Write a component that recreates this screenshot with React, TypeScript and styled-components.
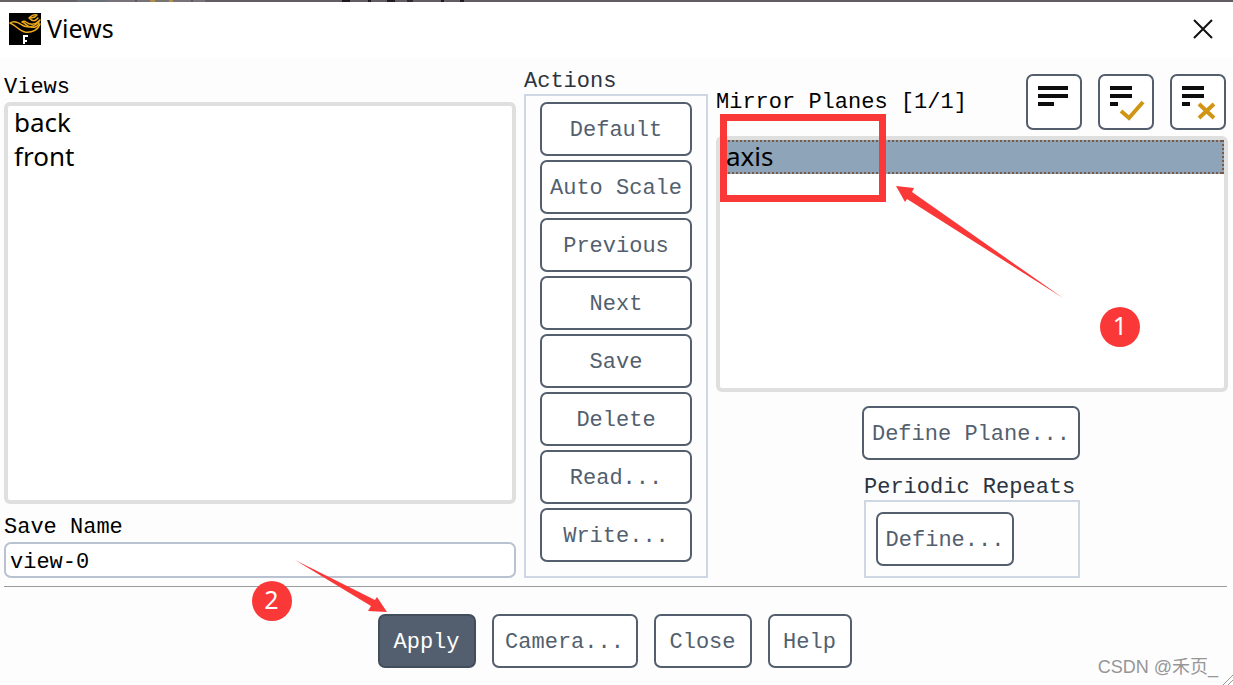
import React, { useState } from "react";
import styled, { createGlobalStyle, css } from "styled-components";

const MONO = '"Liberation Mono", monospace';
const SANS = '"Noto Sans", "Open Sans", sans-serif';
const RED = "#fb3838";
const SLATE = "#535f6e";

const GlobalStyle = createGlobalStyle`
  *, *::before, *::after { box-sizing: border-box; }
  body { margin: 0; background: #fdfdfd; color: #000; font: 22px/24px ${MONO}; }
`;

const Dialog = styled.main`
  position: relative;
  display: flex;
  flex-direction: column;
  min-height: 100vh;
  overflow: hidden;
`;

const Backdrop = styled.div`
  height: 2px;
  background: linear-gradient(
    90deg,
    #666165 0 77px, #6a7078 77px 107px, #77727a 107px 135px, #5a565a 135px 137px,
    #77727a 137px 150px, #b08d48 150px 155px, #77756e 155px 169px, #b08d48 169px 173px,
    #77727a 173px 191px, #5a565a 191px 193px, #77727a 193px 205px, #625d63 205px 342px,
    #1d1b1d 342px 350px, #625d63 350px 368px, #1d1b1d 368px 371px, #625d63 371px 387px,
    #1d1b1d 387px 395px, #625d63 395px 407px, #2d2b2d 407px 413px, #625d63 413px 441px,
    #1d1b1d 441px 444px, #625d63 444px 460px, #1d1b1d 460px 464px, #625d63 464px
  );
`;

const TitleBar = styled.header`
  display: flex;
  align-items: center;
  gap: 5px;
  height: 56px;
  padding: 0 16px 2px 9px;
  background: #fff;
`;

const Title = styled.h1`
  flex: 1;
  margin: 0;
  padding-bottom: 2px;
  font: 400 25px/32px ${SANS};
`;

const CloseButton = styled.button`
  display: flex;
  padding: 4px;
  border: 0;
  background: none;
`;

const Columns = styled.div`
  flex: 1;
  display: grid;
  grid-template-columns: minmax(0, 1fr) 184px minmax(0, 1fr);
  gap: 8px;
  margin: 8px 5px 8px 4px;
`;

const Column = styled.section<{ $top?: number }>`
  position: relative;
  display: flex;
  flex-direction: column;
  padding-top: ${(p) => p.$top ?? 0}px;
`;

const labelText = css`
  margin: 0;
  padding-top: 2px;
  font: 400 22px/24px ${MONO};
  white-space: nowrap;
`;

const Label = styled.label`
  ${labelText}
  display: block;
`;

const Heading = styled.h2`
  ${labelText}
  color: #2b3440;
`;

const List = styled.ul`
  flex: 1;
  margin: 2px 0 0;
  padding: 0;
  border: 4px solid #dfdfdf;
  border-radius: 6px;
  background: #fff;
  list-style: none;
`;

const dots = (angle: number) =>
  `repeating-linear-gradient(${angle}deg, #7a5a44 0 2px, transparent 2px 4px)`;

const Item = styled.li<{ $selected?: boolean }>`
  height: 34px;
  padding: 0 6px;
  font: 26px/32px ${SANS};
  ${(p) =>
    p.$selected &&
    css`
      background:
        ${dots(90)} top / 100% 2px no-repeat,
        ${dots(90)} bottom / 100% 2px no-repeat,
        ${dots(180)} right / 2px 100% no-repeat,
        #8ea4b8;
    `}
`;

const SaveField = styled.div`
  padding-top: 10px;
`;

const NameInput = styled.input`
  display: block;
  width: 100%;
  height: 36px;
  margin-top: 2px;
  padding: 4px 4px 0;
  border: 2px solid #b8c2d0;
  border-radius: 7px;
  background: #fff;
  color: #000;
  font: 22px/24px ${MONO};
`;

const Button = styled.button<{ $primary?: boolean; $width?: number }>`
  flex: none;
  width: ${(p) => (p.$width ? `${p.$width}px` : "auto")};
  height: 54px;
  padding: 4px 0 0;
  border: 2px solid ${(p) => (p.$primary ? "#434e5c" : SLATE)};
  border-radius: 7px;
  background: ${(p) => (p.$primary ? SLATE : "#fff")};
  color: ${(p) => (p.$primary ? "#fff" : SLATE)};
  font: 22px/24px ${MONO};
  white-space: nowrap;
`;

const Group = styled.div`
  border: 2px solid #d0d7e4;
`;

const ActionGroup = styled(Group)`
  flex: 1;
  display: flex;
  flex-direction: column;
  align-items: center;
  gap: 4px;
  padding: 6px 0 14px;
`;

const PlaneHeader = styled.div`
  display: flex;
  align-items: center;
  justify-content: space-between;
  height: 56px;
  padding-right: 2px;
`;

const Tools = styled.div`
  display: flex;
  gap: 16px;
`;

const ToolButton = styled(Button)`
  width: 56px;
  height: 56px;
  padding: 0;
`;

const PlaneList = styled(List)`
  margin-top: 6px;
`;

const PlaneActions = styled.div`
  display: flex;
  flex-direction: column;
  align-items: center;
  padding: 14px 2px 0 0;
`;

const Periodic = styled.section`
  width: 218px;
  margin-top: 14px;
  padding-left: 2px;
`;

const PeriodicGroup = styled(Group)`
  padding: 10px;
`;

const Footer = styled.footer`
  position: relative;
  display: flex;
  justify-content: center;
  gap: 16px;
  margin: 0 6px 0 4px;
  padding: 27px 2px 17px 0;
  border-top: 1px solid #9b9b9b;
`;

const Highlight = styled.div`
  position: absolute;
  top: 48px;
  left: 4px;
  width: 166px;
  height: 88px;
  border: 7px solid ${RED};
  pointer-events: none;
`;

const Arrow = styled.svg<{ $top: number; $left: string }>`
  position: absolute;
  top: ${(p) => p.$top}px;
  left: ${(p) => p.$left};
  fill: ${RED};
  pointer-events: none;
`;

const Badge = styled.span<{ $top: number; $left: string }>`
  position: absolute;
  top: ${(p) => p.$top}px;
  left: ${(p) => p.$left};
  width: 40px;
  height: 40px;
  border-radius: 50%;
  background: ${RED};
  color: #fff;
  font: 25px/36px ${SANS};
  text-align: center;
`;

const Watermark = styled.span`
  position: absolute;
  right: 15px;
  bottom: 6px;
  color: #969696;
  font: 18px/24px "Liberation Sans", "Noto Sans CJK SC", sans-serif;
`;

const Grip = styled.svg`
  position: absolute;
  right: 0;
  bottom: 0;
`;

const Logo = () => (
  <svg width="33" height="32" viewBox="0 0 33 32" aria-hidden="true">
    <path d="M0 0h32v32H0z" fill="#000" />
    <g fill="none" stroke="#eda91c" strokeWidth="1.5" strokeLinejoin="round" strokeLinecap="round">
      <path d="M31 11c-2 6-8 9-15 8C10 18 8 13 1 10c4-3 8-1 12 2 5 3 12 3 18-5" />
      <path d="M30 8c-4 4-9 4-13 1-1-1-3-1-4 0 4 1 5 5 9 5 4 1 7-1 8-4" />
      <path d="M29 5c-3 4-6 3-9 0 3-1 5 1 8-3-3-1-5 0-7 2" />
    </g>
    <path d="M14 23h5M14 28h4M15 22v9" stroke="#fff" strokeWidth="2" fill="none" />
  </svg>
);

const ListIcon = ({ mark }: { mark?: "check" | "cross" }) => (
  <svg width="52" height="52" viewBox="0 0 52 52" aria-hidden="true">
    <path
      d={mark ? "M10 12h22M10 20h22M10 28h8" : "M10 12h30M10 20h30M10 28h16"}
      stroke="#0d0d0d"
      strokeWidth="4"
    />
    {mark === "check" && (
      <path d="M21 35l8 7 14-16" fill="none" stroke="#cf9513" strokeWidth="4" />
    )}
    {mark === "cross" && (
      <path d="M27 28l15 14M42 28L27 42" fill="none" stroke="#cf9513" strokeWidth="4" />
    )}
  </svg>
);

const ACTIONS = ["Default", "Auto Scale", "Previous", "Next", "Save", "Delete", "Read...", "Write..."];

export default function App() {
  const [name, setName] = useState("view-0");
  return (
    <>
      <GlobalStyle />
      <Dialog>
        <Backdrop />
        <TitleBar>
          <Logo />
          <Title>Views</Title>
          <CloseButton aria-label="Close window">
            <svg width="20" height="20" viewBox="0 0 20 20" aria-hidden="true">
              <path d="M1 1l18 18M19 1L1 19" stroke="#111" strokeWidth="2" />
            </svg>
          </CloseButton>
        </TitleBar>
        <Columns>
          <Column $top={8}>
            <Label as="h2" id="views-label">Views</Label>
            <List role="listbox" aria-labelledby="views-label">
              <Item role="option" aria-selected={false}>back</Item>
              <Item role="option" aria-selected={false}>front</Item>
            </List>
            <SaveField>
              <Label htmlFor="save-name">Save Name</Label>
              <NameInput id="save-name" value={name} onChange={(e) => setName(e.target.value)} />
            </SaveField>
          </Column>
          <Column $top={2}>
            <Heading>Actions</Heading>
            <ActionGroup>
              {ACTIONS.map((action) => (
                <Button key={action} $width={152}>{action}</Button>
              ))}
            </ActionGroup>
          </Column>
          <Column $top={8}>
            <PlaneHeader>
              <Label as="h2" id="planes-label">Mirror Planes [1/1]</Label>
              <Tools>
                <ToolButton aria-label="Toggle list"><ListIcon /></ToolButton>
                <ToolButton aria-label="Select all"><ListIcon mark="check" /></ToolButton>
                <ToolButton aria-label="Deselect all"><ListIcon mark="cross" /></ToolButton>
              </Tools>
            </PlaneHeader>
            <PlaneList role="listbox" aria-labelledby="planes-label">
              <Item role="option" aria-selected $selected>axis</Item>
            </PlaneList>
            <PlaneActions>
              <Button $width={218}>Define Plane...</Button>
              <Periodic>
                <Heading>Periodic Repeats</Heading>
                <PeriodicGroup>
                  <Button $width={138}>Define...</Button>
                </PeriodicGroup>
              </Periodic>
            </PlaneActions>
            <Highlight />
            <Arrow $top={120} $left="180px" width="168" height="114" viewBox="0 0 168 114" aria-hidden="true">
              <path d="M0 0L18 2L16 6L167 112L11 13L9 16Z" />
            </Arrow>
            <Badge $top={241} $left="384px">1</Badge>
          </Column>
        </Columns>
        <Footer>
          <Button $primary $width={98}>Apply</Button>
          <Button $width={146}>Camera...</Button>
          <Button $width={98}>Close</Button>
          <Button $width={84}>Help</Button>
          <Arrow $top={-27} $left="calc(50% - 321px)" width="94" height="54" viewBox="0 0 94 54" aria-hidden="true">
            <path d="M0 0L80 40L82 37L92 52L73 51L76 46Z" />
          </Arrow>
          <Badge $top={-6} $left="calc(50% - 364px)">2</Badge>
        </Footer>
        <Watermark>CSDN @禾页_</Watermark>
        <Grip width="10" height="10" viewBox="0 0 10 10" aria-hidden="true">
          <path d="M0 10L10 0M5 10l5-5" stroke="#999" strokeWidth="1" />
        </Grip>
      </Dialog>
    </>
  );
}
